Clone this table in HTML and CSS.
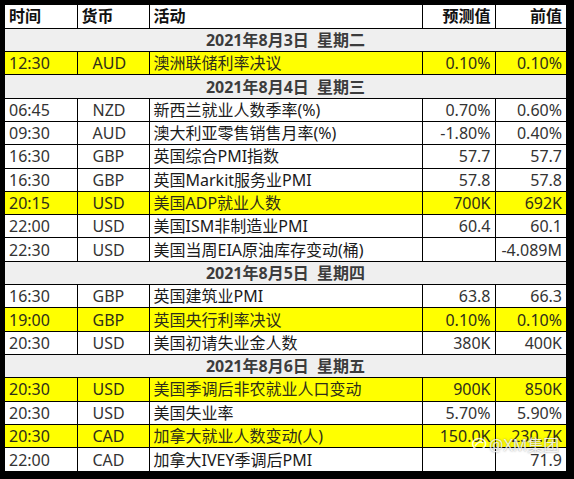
FILE: index.html
```html
<!DOCTYPE html>
<html>
<head>
  <meta charset="UTF-8">
  <link rel="stylesheet" href="styles.css">
</head>
<body>
  <div class="frame">
    <table class="calendar">
      <colgroup>
        <col class="col-time">
        <col class="col-cur">
        <col class="col-event">
        <col class="col-fc">
        <col class="col-prev">
      </colgroup>
      <tr class="head">
        <th class="left">时间</th>
        <th class="left">货币</th>
        <th class="left">活动</th>
        <th class="num">预测值</th>
        <th class="num">前值</th>
      </tr>

      <tr class="day"><td colspan="5">2021年8月3日&nbsp;&nbsp;星期二</td></tr>
      <tr class="hot"><td>12:30</td><td class="cur">AUD</td><td class="event">澳洲联储利率决议</td><td class="num">0.10%</td><td class="num">0.10%</td></tr>

      <tr class="day"><td colspan="5">2021年8月4日&nbsp;&nbsp;星期三</td></tr>
      <tr><td>06:45</td><td class="cur">NZD</td><td class="event">新西兰就业人数季率(%)</td><td class="num">0.70%</td><td class="num">0.60%</td></tr>
      <tr><td>09:30</td><td class="cur">AUD</td><td class="event">澳大利亚零售销售月率(%)</td><td class="num">-1.80%</td><td class="num">0.40%</td></tr>
      <tr><td>16:30</td><td class="cur">GBP</td><td class="event">英国综合PMI指数</td><td class="num">57.7</td><td class="num">57.7</td></tr>
      <tr><td>16:30</td><td class="cur">GBP</td><td class="event">英国Markit服务业PMI</td><td class="num">57.8</td><td class="num">57.8</td></tr>
      <tr class="hot"><td>20:15</td><td class="cur">USD</td><td class="event">美国ADP就业人数</td><td class="num">700K</td><td class="num">692K</td></tr>
      <tr><td>22:00</td><td class="cur">USD</td><td class="event">美国ISM非制造业PMI</td><td class="num">60.4</td><td class="num">60.1</td></tr>
      <tr><td>22:30</td><td class="cur">USD</td><td class="event">美国当周EIA原油库存变动(桶)</td><td class="num"></td><td class="num">-4.089M</td></tr>

      <tr class="day"><td colspan="5">2021年8月5日&nbsp;&nbsp;星期四</td></tr>
      <tr><td>16:30</td><td class="cur">GBP</td><td class="event">英国建筑业PMI</td><td class="num">63.8</td><td class="num">66.3</td></tr>
      <tr class="hot"><td>19:00</td><td class="cur">GBP</td><td class="event">英国央行利率决议</td><td class="num">0.10%</td><td class="num">0.10%</td></tr>
      <tr><td>20:30</td><td class="cur">USD</td><td class="event">美国初请失业金人数</td><td class="num">380K</td><td class="num">400K</td></tr>

      <tr class="day"><td colspan="5">2021年8月6日&nbsp;&nbsp;星期五</td></tr>
      <tr class="hot"><td>20:30</td><td class="cur">USD</td><td class="event">美国季调后非农就业人口变动</td><td class="num">900K</td><td class="num">850K</td></tr>
      <tr><td>20:30</td><td class="cur">USD</td><td class="event">美国失业率</td><td class="num">5.70%</td><td class="num">5.90%</td></tr>
      <tr class="hot"><td>20:30</td><td class="cur">CAD</td><td class="event">加拿大就业人数变动(人)</td><td class="num">150.0K</td><td class="num">230.7K</td></tr>
      <tr><td>22:00</td><td class="cur">CAD</td><td class="event">加拿大IVEY季调后PMI</td><td class="num"></td><td class="num">71.9</td></tr>
    </table>

    <div class="watermark">
      <svg width="16" height="14" viewBox="0 0 16 14">
        <ellipse cx="8" cy="7" rx="6.5" ry="5.5" fill="none" stroke="rgba(255,255,255,0.85)" stroke-width="1.6"/>
        <path d="M4 9 Q8 3 12 6" fill="none" stroke="rgba(255,255,255,0.85)" stroke-width="1.4"/>
      </svg>
      <span>@XM集团</span>
    </div>
  </div>
</body>
</html>
```

FILE: styles.css
```css
body {
  margin: 0;
  width: 574px;
  height: 479px;
  background: #000000;
  font-family: "Noto Sans", "Noto Sans CJK SC", sans-serif;
  overflow: hidden;
}

.frame {
  position: relative;
  padding: 5px 0 0 5px;
}

.calendar {
  width: 561px;
  border-collapse: collapse;
  table-layout: fixed;
  background: #ffffff;
  font-size: 16px;
  color: #333333;
}

.col-time { width: 72px; }
.col-cur { width: 72px; }
.col-event { width: 273px; }
.col-fc { width: 73px; }
.col-prev { width: 71px; }

.calendar tr {
  height: 23.3px;
}

.calendar th,
.calendar td {
  padding: 0 4px;
  border: 1px solid #000000;
  white-space: nowrap;
  overflow: hidden;
  line-height: 20px;
  font-weight: normal;
}

.calendar tr:first-child th {
  border-top: none;
}

.calendar th:first-child,
.calendar td:first-child {
  border-left: none;
}

.calendar th:last-child,
.calendar td:last-child {
  border-right: none;
}

.calendar tr:last-child td {
  border-bottom: none;
}

.head th {
  font-weight: 700;
  color: #111111;
}

.left {
  text-align: left;
}

.num {
  text-align: right;
}

.cur {
  padding-left: 15px !important;
}

.event {
  color: #1a1a1a;
}

.day td {
  background: #efefef;
  text-align: center;
  font-weight: 700;
  color: #3c3c3c;
}

.hot td {
  background: #ffff00;
  color: #2e2e1a;
}

.watermark {
  position: absolute;
  left: 471px;
  top: 432px;
  display: flex;
  align-items: center;
  gap: 2px;
  font-size: 16px;
  color: rgba(255, 255, 255, 0.85);
  text-shadow: 0 0 2px rgba(60, 60, 60, 0.6);
}
```
